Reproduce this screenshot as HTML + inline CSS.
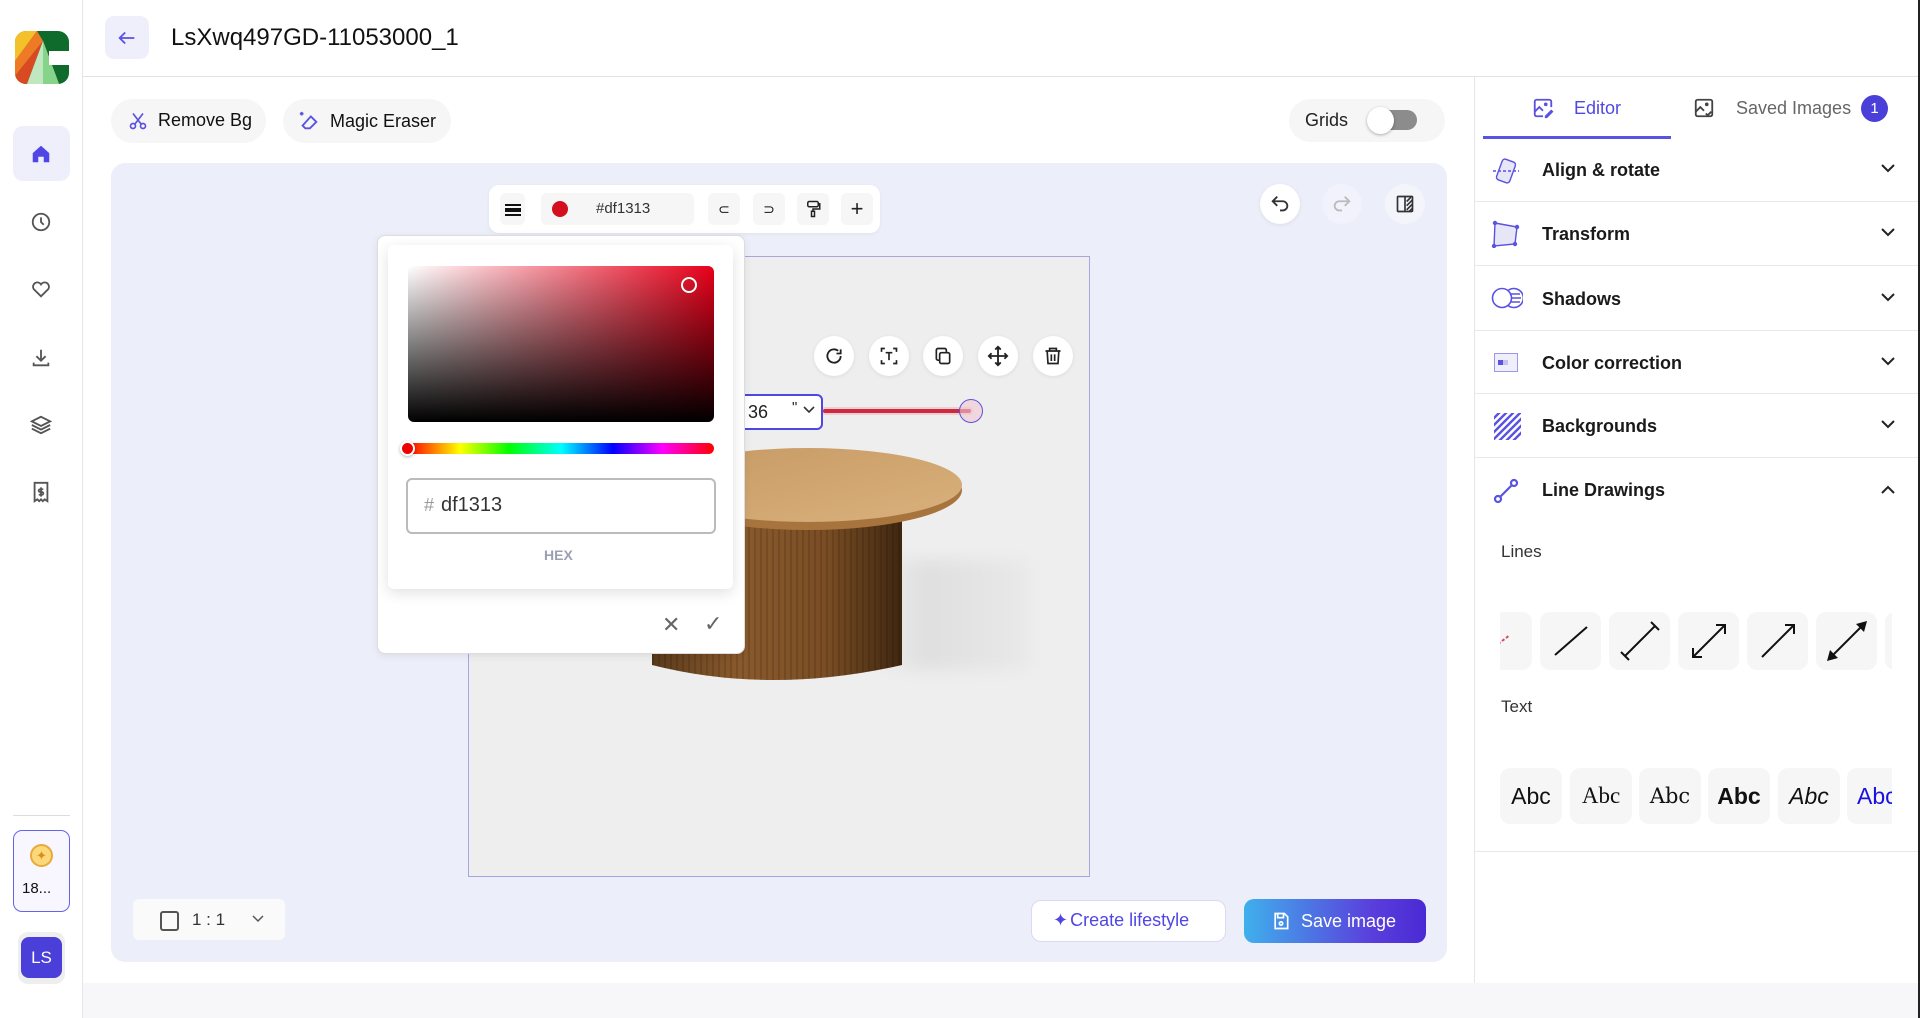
<!DOCTYPE html>
<html><head><meta charset="utf-8"><style>
*{box-sizing:border-box;margin:0;padding:0}
body{width:1920px;height:1018px;position:relative;overflow:hidden;background:#fff;font-family:"Liberation Sans",sans-serif;color:#111}
.a{position:absolute}
.ic{position:absolute;display:flex;align-items:center;justify-content:center}
.circ{position:absolute;border-radius:50%;background:#fff;box-shadow:0 1px 4px rgba(0,0,0,.08);display:flex;align-items:center;justify-content:center}
.row{position:absolute;left:1474px;width:444px;border-bottom:1px solid #e8e8ec}
.row .lb{position:absolute;left:68px;font-size:18px;font-weight:bold;color:#1a1a1a}
.row .ch{position:absolute;left:406px}
.tile{position:absolute;width:61px;height:58px;background:#f6f6f7;border-radius:10px;display:flex;align-items:center;justify-content:center}
.abc{position:absolute;top:768px;width:62px;height:56px;background:#f6f6f7;border-radius:10px;display:flex;align-items:center;justify-content:center;font-size:23px;overflow:hidden}
</style></head><body>
<!-- sidebar -->
<div class="a" style="left:0;top:0;width:83px;height:1018px;border-right:1px solid #e6e6ea;background:#fff"></div>
<svg class="a" style="left:15px;top:31px" width="54" height="53" viewBox="0 0 54 53">
<defs><clipPath id="lc"><rect width="54" height="53" rx="11"/></clipPath></defs>
<g clip-path="url(#lc)"><rect width="54" height="53" fill="#0f6b2c"/>
<polygon points="0,0 22,0 0,30" fill="#f5c12b"/><polygon points="0,30 22,0 28,10 0,45" fill="#ee7a25"/><polygon points="0,45 28,10 12,53 0,53" fill="#d94a22"/>
<polygon points="28,10 12,53 44,53" fill="#bfe8c0"/><polygon points="28,10 28,53 44,53" fill="#86d38a"/><rect x="34" y="20" width="20" height="14" fill="#fff"/></g></svg>
<div class="a" style="left:13px;top:126px;width:57px;height:55px;background:#efeefb;border-radius:10px"></div>
<svg class="a" style="left:30px;top:143px" width="22" height="22" viewBox="0 0 24 24"><path d="M3 11 12 3l9 8v10h-6v-6h-6v6H3z" fill="#4f46e5"/></svg>
<svg class="a" style="left:30px;top:211px" width="22" height="22" viewBox="0 0 24 24" fill="none" stroke="#555" stroke-width="2"><circle cx="12" cy="12" r="9"/><path d="M12 7v5l3 3"/></svg>
<svg class="a" style="left:30px;top:278px" width="22" height="22" viewBox="0 0 24 24" fill="none" stroke="#555" stroke-width="2"><path d="M12 20 4 12a4.5 4.5 0 0 1 8-5 4.5 4.5 0 0 1 8 5z"/></svg>
<svg class="a" style="left:30px;top:347px" width="22" height="22" viewBox="0 0 24 24" fill="none" stroke="#555" stroke-width="2"><path d="M12 3v12M7 10l5 5 5-5M4 17v3h16v-3"/></svg>
<svg class="a" style="left:30px;top:414px" width="22" height="22" viewBox="0 0 24 24" fill="none" stroke="#555" stroke-width="2"><path d="M12 3 2 8l10 5 10-5zM2 12l10 5 10-5M2 16l10 5 10-5"/></svg>
<svg class="a" style="left:30px;top:481px" width="22" height="22" viewBox="0 0 24 24" fill="none" stroke="#555" stroke-width="2"><path d="M5 2h14v20l-3-2-2 2-2-2-2 2-2-2-3 2z"/><path d="M12 7v10M14.5 9h-3.5a1.5 1.5 0 0 0 0 3h2a1.5 1.5 0 0 1 0 3H9.5"/></svg>
<div class="a" style="left:13px;top:815px;width:57px;height:1px;background:#ddd"></div>
<div class="a" style="left:13px;top:830px;width:57px;height:82px;border:1.5px solid #6a62e6;border-radius:9px;background:#f8f7ff"></div>
<div class="a" style="left:30px;top:844px;width:23px;height:23px;border-radius:50%;background:#fbd97a;border:2px solid #eaa93a;color:#e08b1a;font-size:13px;text-align:center;line-height:19px">✦</div>
<div class="a" style="left:22px;top:880px;font-size:15px">18...</div>
<div class="a" style="left:18px;top:932px;width:47px;height:52px;background:#eee;border-radius:10px"></div>
<div class="a" style="left:21px;top:937px;width:41px;height:41px;background:#4a3fd8;border-radius:8px;color:#fff;font-size:17px;display:flex;align-items:center;justify-content:center">LS</div>
<!-- header -->
<div class="a" style="left:83px;top:76px;width:1837px;height:1px;background:#e2e2e6"></div>
<div class="a" style="left:105px;top:16px;width:44px;height:43px;background:#efeefb;border-radius:9px"></div>
<svg class="a" style="left:116px;top:27px" width="22" height="22" viewBox="0 0 24 24" fill="none" stroke="#5a52e0" stroke-width="2"><path d="M20 12H4M10 6l-6 6 6 6"/></svg>
<div class="a" style="left:171px;top:24px;font-size:24px;font-weight:500;color:#111">LsXwq497GD-11053000_1</div>
<!-- tool buttons -->
<div class="a" style="left:111px;top:99px;width:155px;height:44px;background:#f6f6f7;border-radius:22px"></div>
<svg class="a" style="left:128px;top:110px" width="20" height="22" viewBox="0 0 24 24" fill="none" stroke="#5a52e0" stroke-width="2"><circle cx="6" cy="18" r="3"/><circle cx="18" cy="18" r="3"/><path d="M8 16 18 3M16 16 6 3"/></svg>
<div class="a" style="left:158px;top:110px;font-size:18px">Remove Bg</div>
<div class="a" style="left:283px;top:99px;width:168px;height:44px;background:#f6f6f7;border-radius:22px"></div>
<svg class="a" style="left:298px;top:110px" width="22" height="22" viewBox="0 0 24 24" fill="none" stroke="#5a52e0" stroke-width="2"><path d="M14 7l6 6-7 7H8l-3-3z"/><path d="M4 2v4M2 4h4"/></svg>
<div class="a" style="left:330px;top:111px;font-size:18px">Magic Eraser</div>
<div class="a" style="left:1289px;top:99px;width:156px;height:43px;background:#f6f6f7;border-radius:22px"></div>
<div class="a" style="left:1305px;top:110px;font-size:18px;color:#222">Grids</div>
<div class="a" style="left:1370px;top:110px;width:47px;height:20px;background:#8c8c8c;border-radius:10px"></div>
<div class="a" style="left:1367px;top:107px;width:27px;height:27px;background:#fff;border-radius:50%;box-shadow:0 1px 3px rgba(0,0,0,.3)"></div>
<!-- canvas -->
<div class="a" style="left:111px;top:163px;width:1336px;height:799px;background:#eceffa;border-radius:14px"></div>
<div class="a" style="left:83px;top:983px;width:1837px;height:35px;background:#f7f7f9"></div>
<div class="a" style="left:468px;top:256px;width:622px;height:621px;background:#eeeeee;border:1px solid #a9a5e2"></div>
<!-- shadow & table -->
<div class="a" style="left:880px;top:560px;width:150px;height:110px;background:linear-gradient(90deg,rgba(0,0,0,.0),rgba(0,0,0,.06) 30%,rgba(0,0,0,.02));filter:blur(8px)"></div>
<svg class="a" style="left:640px;top:440px" width="340" height="250" viewBox="0 0 340 250">
<defs><linearGradient id="cy" x1="0" x2="1"><stop offset="0" stop-color="#5a3a1c"/><stop offset=".35" stop-color="#8a5a2c"/><stop offset=".7" stop-color="#7a4d24"/><stop offset="1" stop-color="#3f2710"/></linearGradient>
<linearGradient id="tp" x1="0" x2="1" y1="0" y2="1"><stop offset="0" stop-color="#c79a64"/><stop offset="1" stop-color="#d9b07c"/></linearGradient>
<pattern id="fl" width="6" height="10" patternUnits="userSpaceOnUse"><rect width="2" height="10" fill="rgba(0,0,0,.12)"/></pattern></defs>
<path d="M12 70 V225 Q130 255 262 225 V70 Z" fill="url(#cy)"/>
<path d="M12 70 V225 Q130 255 262 225 V70 Z" fill="url(#fl)"/>
<ellipse cx="168" cy="50" rx="154" ry="40" fill="#a8743e"/>
<ellipse cx="168" cy="45" rx="154" ry="37" fill="url(#tp)"/>
</svg>
<!-- object action circles -->
<div class="circ" style="left:814px;top:336px;width:40px;height:40px"><svg width="20" height="20" viewBox="0 0 24 24" fill="none" stroke="#222" stroke-width="2.2"><path d="M20 12a8 8 0 1 1-3-6.2M20 4v5h-5"/></svg></div>
<div class="circ" style="left:869px;top:336px;width:40px;height:40px"><svg width="20" height="20" viewBox="0 0 24 24" fill="none" stroke="#222" stroke-width="2"><path d="M3 7V3h4M17 3h4v4M21 17v4h-4M7 21H3v-4M8 8h8M12 8v9"/></svg></div>
<div class="circ" style="left:923px;top:336px;width:40px;height:40px"><svg width="20" height="20" viewBox="0 0 24 24" fill="none" stroke="#222" stroke-width="2"><rect x="8" y="8" width="12" height="13" rx="2"/><path d="M16 8V5a2 2 0 0 0-2-2H6a2 2 0 0 0-2 2v10a2 2 0 0 0 2 2h2"/></svg></div>
<div class="circ" style="left:978px;top:336px;width:40px;height:40px"><svg width="22" height="22" viewBox="0 0 24 24" fill="none" stroke="#222" stroke-width="2"><path d="M12 2v20M2 12h20M9 5l3-3 3 3M9 19l3 3 3-3M5 9l-3 3 3 3M19 9l3 3-3 3"/></svg></div>
<div class="circ" style="left:1033px;top:336px;width:40px;height:40px"><svg width="20" height="20" viewBox="0 0 24 24" fill="none" stroke="#222" stroke-width="2"><path d="M3 6h18M8 6V3h8v3M5 6l1 15h12l1-15M10 10v8M14 10v8"/></svg></div>
<!-- dimension line -->
<div class="a" style="left:823px;top:409px;width:148px;height:4px;background:#d0283c;border-radius:2px;box-shadow:0 0 0 2px rgba(208,40,60,.15)"></div>
<div class="a" style="left:959px;top:399px;width:24px;height:24px;border-radius:50%;border:1.5px solid #5b52e0;background:rgba(240,200,210,.6)"></div>
<div class="a" style="left:720px;top:394px;width:103px;height:36px;border:2.5px solid #5046e5;border-radius:6px;background:#fff"></div>
<div class="a" style="left:748px;top:402px;font-size:18px;color:#222">36</div>
<div class="a" style="left:792px;top:399px;font-size:15px;color:#222">"</div>
<svg class="a" style="left:802px;top:405px" width="14" height="10" viewBox="0 0 14 10" fill="none" stroke="#333" stroke-width="1.6"><path d="M2 2l5 5 5-5"/></svg>
<!-- floating toolbar -->
<div class="a" style="left:489px;top:185px;width:391px;height:48px;background:#fff;border-radius:10px;box-shadow:0 1px 4px rgba(0,0,0,.06)"></div>
<div class="a" style="left:500px;top:193px;width:25px;height:32px;background:#f6f6f7;border-radius:6px"></div>
<div class="a" style="left:505px;top:204px;width:16px;height:2px;background:#111"></div>
<div class="a" style="left:505px;top:208px;width:16px;height:4px;background:#111"></div>
<div class="a" style="left:505px;top:214px;width:16px;height:2px;background:#111"></div>
<div class="a" style="left:541px;top:193px;width:153px;height:32px;background:#f6f6f7;border-radius:6px"></div>
<div class="a" style="left:552px;top:201px;width:16px;height:16px;border-radius:50%;background:#d40f1f"></div>
<div class="a" style="left:596px;top:200px;font-size:15px;color:#333">#df1313</div>
<div class="a" style="left:708px;top:193px;width:32px;height:32px;background:#f6f6f7;border-radius:6px;text-align:center;line-height:32px;font-size:14px">⊂</div>
<div class="a" style="left:753px;top:193px;width:32px;height:32px;background:#f6f6f7;border-radius:6px;text-align:center;line-height:32px;font-size:14px">⊃</div>
<div class="a" style="left:797px;top:193px;width:32px;height:32px;background:#f6f6f7;border-radius:6px"></div>
<svg class="a" style="left:804px;top:199px" width="18" height="20" viewBox="0 0 24 24" fill="none" stroke="#222" stroke-width="2"><rect x="5" y="2" width="14" height="7" rx="2"/><path d="M19 5h2v7h-9v3M10 15h4v7h-4z"/></svg>
<div class="a" style="left:841px;top:193px;width:32px;height:32px;background:#f6f6f7;border-radius:6px;text-align:center;line-height:31px;font-size:22px;color:#222">+</div>
<!-- undo/redo -->
<div class="circ" style="left:1260px;top:184px;width:40px;height:40px"><svg width="22" height="22" viewBox="0 0 24 24" fill="none" stroke="#333" stroke-width="2"><path d="M9 14 4 9l5-5M4 9h11a5 5 0 0 1 0 10h-3"/></svg></div>
<div class="circ" style="left:1322px;top:184px;width:40px;height:40px;box-shadow:none;background:#f1f2fb"><svg width="22" height="22" viewBox="0 0 24 24" fill="none" stroke="#bbb" stroke-width="2"><path d="M15 14l5-5-5-5M20 9H9a5 5 0 0 0 0 10h3"/></svg></div>
<div class="circ" style="left:1385px;top:184px;width:40px;height:40px;box-shadow:none;background:#f4f5fb"><svg width="20" height="20" viewBox="0 0 24 24" fill="none" stroke="#333" stroke-width="2"><rect x="3" y="3" width="18" height="18" rx="1"/><path d="M12 3v18M14 9l5-5M14 14l7-7M14 19l7-7M17 21l4-4"/></svg></div>
<!-- color picker -->
<div class="a" style="left:377px;top:235px;width:368px;height:419px;background:#fff;border-radius:8px;border:1px solid #ddd;box-shadow:0 2px 8px rgba(0,0,0,.08)"></div>
<div class="a" style="left:388px;top:245px;width:345px;height:344px;background:#fff;border-radius:6px;box-shadow:0 4px 14px rgba(0,0,0,.12)"></div>
<div class="a" style="left:408px;top:266px;width:306px;height:156px;border-radius:6px;background:linear-gradient(to bottom,rgba(0,0,0,0),#000),linear-gradient(to right,#fff,#e8001a)"></div>
<div class="a" style="left:681px;top:277px;width:16px;height:16px;border-radius:50%;border:2px solid #fff"></div>
<div class="a" style="left:408px;top:443px;width:306px;height:11px;border-radius:6px;background:linear-gradient(to right,#f00,#ff0 17%,#0f0 33%,#0ff 50%,#00f 67%,#f0f 83%,#f00)"></div>
<div class="a" style="left:400px;top:441px;width:15px;height:15px;border-radius:50%;background:#e00;border:2px solid #fff;box-shadow:0 1px 3px rgba(0,0,0,.3)"></div>
<div class="a" style="left:406px;top:478px;width:310px;height:56px;border:2px solid #bbb;border-radius:6px"></div>
<div class="a" style="left:424px;top:495px;font-size:18px;color:#999">#</div>
<div class="a" style="left:441px;top:494px;font-size:20px;color:#333">df1313</div>
<div class="a" style="left:544px;top:547px;font-size:14px;font-weight:bold;color:#9aa0b4">HEX</div>
<div class="a" style="left:662px;top:612px;font-size:22px;color:#666">✕</div>
<div class="a" style="left:704px;top:611px;font-size:22px;color:#666">✓</div>
<!-- bottom canvas controls -->
<div class="a" style="left:133px;top:899px;width:152px;height:41px;background:#fafafa;border-radius:6px"></div>
<div class="a" style="left:160px;top:911px;width:19px;height:20px;border:2px solid #555;border-radius:3px"></div>
<div class="a" style="left:192px;top:910px;font-size:17px;color:#333">1 : 1</div>
<svg class="a" style="left:251px;top:914px" width="14" height="10" viewBox="0 0 14 10" fill="none" stroke="#555" stroke-width="1.5"><path d="M2 2l5 5 5-5"/></svg>
<div class="a" style="left:1031px;top:900px;width:195px;height:42px;background:#fff;border:1px solid #dad8f5;border-radius:10px"></div>
<div class="a" style="left:1053px;top:910px;font-size:18px;color:#4f46e5">✦<span style="margin-left:2px">Create lifestyle</span></div>
<div class="a" style="left:1244px;top:899px;width:182px;height:44px;border-radius:10px;background:linear-gradient(90deg,#3fb0ec,#5a3fdc 70%,#4a2ad4)"></div>
<svg class="a" style="left:1271px;top:910px" width="20" height="22" viewBox="0 0 24 24" fill="none" stroke="#fff" stroke-width="2"><path d="M5 3h11l4 4v14H5z"/><path d="M8 3v5h7V3"/><circle cx="12" cy="15" r="2"/></svg>
<div class="a" style="left:1301px;top:911px;font-size:18px;color:#fff">Save image</div>
<!-- right panel -->
<div class="a" style="left:1474px;top:77px;width:1px;height:906px;background:#e6e6ea"></div>
<div class="a" style="left:1918px;top:0;width:2px;height:1018px;background:#222"></div>
<svg class="a" style="left:1532px;top:97px" width="22" height="22" viewBox="0 0 24 24" fill="none" stroke="#5a52e0" stroke-width="2"><path d="M12 21H5a2 2 0 0 1-2-2V5a2 2 0 0 1 2-2h14a2 2 0 0 1 2 2v6"/><path d="M3 16l5-5 4 4"/><circle cx="15" cy="8" r="1"/><path d="M15 21l6-6 1 1-6 6h-1z"/></svg>
<div class="a" style="left:1574px;top:98px;font-size:18px;color:#5148e0">Editor</div>
<div class="a" style="left:1483px;top:136px;width:188px;height:3px;background:#5a52e0"></div>
<svg class="a" style="left:1693px;top:97px" width="22" height="22" viewBox="0 0 24 24" fill="none" stroke="#444" stroke-width="2"><rect x="3" y="3" width="18" height="18" rx="2"/><path d="M3 16l5-5 4 4M14 18l2 2 4-4"/><circle cx="15" cy="8" r="1"/></svg>
<div class="a" style="left:1736px;top:98px;font-size:18px;color:#666">Saved Images</div>
<div class="a" style="left:1861px;top:95px;width:27px;height:27px;border-radius:50%;background:#4a3fd8;color:#fff;font-size:15px;text-align:center;line-height:27px">1</div>
<div class="row" style="top:139px;height:63px"><svg class="a" style="left:17px;top:18px" width="30" height="28" viewBox="0 0 30 28" fill="#e6e6f7" stroke="#5a52e0" stroke-width="1.4"><rect x="8" y="3" width="14" height="22" rx="3" transform="rotate(20 15 14)"/><path d="M2 14h26" stroke-dasharray="3 2" fill="none"/></svg><div class="lb" style="top:21px">Align &amp; rotate</div><svg class="ch" style="top:24px" width="16" height="10" viewBox="0 0 16 10" fill="none" stroke="#222" stroke-width="2"><path d="M2 2l6 6 6-6"/></svg></div>
<div class="row" style="top:202px;height:64px"><svg class="a" style="left:17px;top:18px" width="30" height="28" viewBox="0 0 30 28" fill="#e6e6f7" stroke="#5a52e0" stroke-width="1.4"><path d="M4 3l22 4-2 17-21 2z"/><circle cx="4" cy="3" r="1.5" fill="#5a52e0"/><circle cx="26" cy="7" r="1.5" fill="#5a52e0"/><circle cx="24" cy="24" r="1.5" fill="#5a52e0"/><circle cx="3" cy="26" r="1.5" fill="#5a52e0"/></svg><div class="lb" style="top:22px">Transform</div><svg class="ch" style="top:25px" width="16" height="10" viewBox="0 0 16 10" fill="none" stroke="#222" stroke-width="2"><path d="M2 2l6 6 6-6"/></svg></div>
<div class="row" style="top:266px;height:65px"><svg class="a" style="left:17px;top:21px" width="32" height="22" viewBox="0 0 32 22" fill="none" stroke="#5a52e0" stroke-width="1.6"><circle cx="11" cy="11" r="9.5"/><path d="M17 3.5a9.5 9.5 0 1 1 0 15M20 7h9M20 11h10M20 15h9"/></svg><div class="lb" style="top:23px">Shadows</div><svg class="ch" style="top:26px" width="16" height="10" viewBox="0 0 16 10" fill="none" stroke="#222" stroke-width="2"><path d="M2 2l6 6 6-6"/></svg></div>
<div class="row" style="top:331px;height:63px"><div class="a" style="left:20px;top:22px;width:24px;height:19px;border:1px solid #9c97ea;background:#efeefb"></div><div class="a" style="left:24px;top:29px;width:5px;height:5px;background:#5a52e0"></div><div class="a" style="left:29px;top:29px;width:5px;height:5px;background:#c5c2f3"></div><div class="lb" style="top:22px">Color correction</div><svg class="ch" style="top:25px" width="16" height="10" viewBox="0 0 16 10" fill="none" stroke="#222" stroke-width="2"><path d="M2 2l6 6 6-6"/></svg></div>
<div class="row" style="top:394px;height:64px"><svg class="a" style="left:20px;top:19px" width="27" height="27" viewBox="0 0 27 27"><defs><clipPath id="bc"><rect width="27" height="27"/></clipPath></defs><g clip-path="url(#bc)" stroke="#5a52e0" stroke-width="2.4"><path d="M-5 10 10 -5M-5 17 17 -5M-5 24 24 -5M-2 28 28 -2M5 28 28 5M12 28 28 12M19 28 28 19"/></g></svg><div class="lb" style="top:22px">Backgrounds</div><svg class="ch" style="top:25px" width="16" height="10" viewBox="0 0 16 10" fill="none" stroke="#222" stroke-width="2"><path d="M2 2l6 6 6-6"/></svg></div>
<svg class="a" style="left:1493px;top:478px" width="26" height="26" viewBox="0 0 26 26" fill="none" stroke="#5a52e0" stroke-width="2.2"><circle cx="5" cy="21" r="3"/><circle cx="21" cy="5" r="3"/><path d="M7 19 19 7"/></svg>
<div class="a" style="left:1542px;top:480px;font-size:18px;font-weight:bold;color:#1a1a1a">Line Drawings</div>
<svg class="a" style="left:1880px;top:485px" width="16" height="10" viewBox="0 0 16 10" fill="none" stroke="#222" stroke-width="2"><path d="M2 8l6-6 6 6"/></svg>
<div class="a" style="left:1501px;top:542px;font-size:17px;color:#333">Lines</div>
<div class="a" style="left:1500px;top:612px;width:392px;height:60px;overflow:hidden">
<div class="tile" style="left:-29px;top:0"><svg width="20" height="20" viewBox="0 0 20 20"><path d="M2 16 18 4" stroke="#e0455f" stroke-width="2" stroke-dasharray="3 2"/></svg></div>
<div class="tile" style="left:40px;top:0"><svg width="40" height="36" viewBox="0 0 40 36"><path d="M4 32 36 4" stroke="#111" stroke-width="2"/></svg></div>
<div class="tile" style="left:109px;top:0"><svg width="40" height="40" viewBox="0 0 40 40"><path d="M5 35 35 5M1 31l8 8M31 1l8 8" stroke="#111" stroke-width="2"/></svg></div>
<div class="tile" style="left:178px;top:0"><svg width="40" height="40" viewBox="0 0 40 40" fill="none" stroke="#111" stroke-width="2"><path d="M4 36 36 4M4 27v9h9M27 4h9v9"/></svg></div>
<div class="tile" style="left:247px;top:0"><svg width="40" height="40" viewBox="0 0 40 40" fill="none" stroke="#111" stroke-width="2"><path d="M4 36 36 4M27 4h9v9"/></svg></div>
<div class="tile" style="left:316px;top:0"><svg width="44" height="44" viewBox="0 0 44 44"><path d="M6 38 38 6" stroke="#111" stroke-width="2"/><path d="M2 42l3-11 8 8zM42 2l-3 11-8-8z" fill="#111"/></svg></div>
<div class="tile" style="left:385px;top:0"></div>
</div>
<div class="a" style="left:1501px;top:697px;font-size:17px;color:#333">Text</div>
<div class="a" style="left:1500px;top:768px;width:392px;height:58px;overflow:hidden">
<div class="abc" style="left:0;top:0;font-family:'Liberation Sans'">Abc</div>
<div class="abc" style="left:70px;top:0;font-family:'Liberation Serif'">Abc</div>
<div class="abc" style="left:139px;top:0;font-family:'DejaVu Serif';font-size:21px">Abc</div>
<div class="abc" style="left:208px;top:0;font-weight:bold">Abc</div>
<div class="abc" style="left:278px;top:0;font-style:italic">Abc</div>
<div class="abc" style="left:347px;top:0;color:#1a10e0;justify-content:flex-start;padding-left:10px">Abc</div>
</div>
<div class="a" style="left:1474px;top:851px;width:444px;height:1px;background:#e8e8ec"></div>
</body></html>
